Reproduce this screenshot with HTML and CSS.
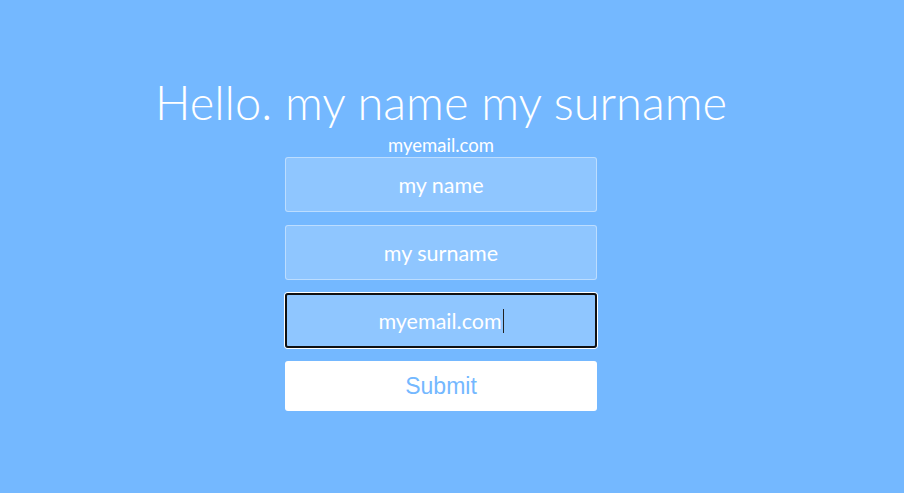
FILE: index.html
```html
<!DOCTYPE html>
<html>
<head>
<meta charset="utf-8">
<link rel="stylesheet" href="styles.css">
</head>
<body>
<div class="page">
  <h1 class="title">Hello. my name my surname</h1>
  <div class="subtitle">myemail.com</div>
  <form class="form">
    <div class="field">my name</div>
    <div class="field">my surname</div>
    <div class="field focused">myemail.com<span class="caret"></span></div>
    <div class="submit">Submit</div>
  </form>
</div>
</body>
</html>
```
FILE: styles.css
```css
html, body {
  margin: 0;
  padding: 0;
  background: #74b8ff;
  height: 100%;
}
.page {
  width: 882px;
  display: flex;
  flex-direction: column;
  align-items: center;
  font-family: Lato, "Open Sans", sans-serif;
  color: #fff;
}
.title {
  margin: 74px 0 0 0;
  font-weight: 300;
  font-size: 47px;
  line-height: 56px;
}
.subtitle {
  font-size: 18.5px;
  font-weight: 400;
  line-height: 22px;
  margin-top: 4px;
}
.form {
  display: flex;
  flex-direction: column;
  gap: 13px;
  width: 312px;
  margin-top: 1px;
}
.field {
  box-sizing: border-box;
  height: 55px;
  border: 1px solid rgba(255,255,255,0.4);
  border-radius: 3px;
  background: rgba(255,255,255,0.2);
  display: flex;
  align-items: center;
  justify-content: center;
  font-size: 21.5px;
  font-weight: 400;
  color: #fff;
}
.field.focused {
  border: 2px solid #111;
  box-shadow: 0 0 0 1px #fff;
}
.caret {
  display: inline-block;
  width: 1px;
  height: 24px;
  background: #222;
  margin-left: 1px;
}
.submit {
  height: 50px;
  background: #fff;
  border-radius: 3px;
  display: flex;
  align-items: center;
  justify-content: center;
  font-family: "Liberation Sans", Arial, sans-serif;
  font-size: 23px;
  color: #74b8ff;
}
```
